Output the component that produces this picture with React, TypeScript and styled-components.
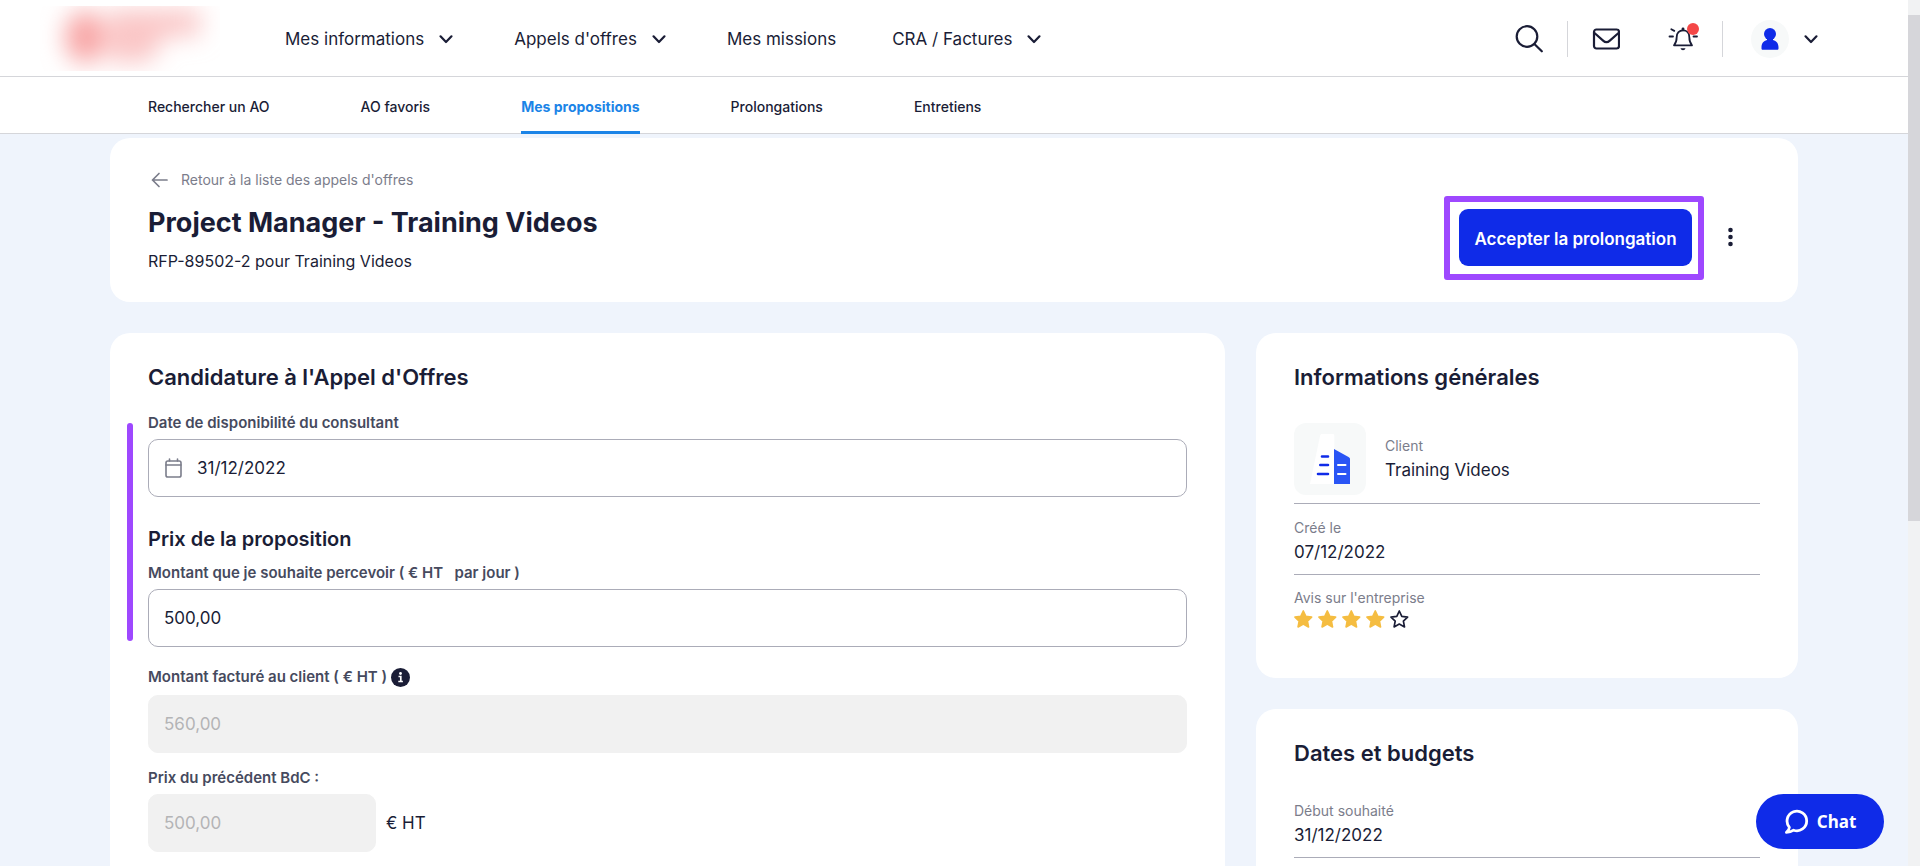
import React from 'react';
import styled, { createGlobalStyle } from 'styled-components';

const color = {
  ink: '#1a1d36',
  label: '#464a5e',
  muted: '#7b7d8b',
  line: '#abacb8',
  hairline: '#d5d6da',
  page: '#eff4fc',
  brand: '#0f2be8',
  tab: '#1b84e7',
  accent: '#9e48ff',
  disabled: '#f1f1f1',
  disabledText: '#b4b4b6',
  star: '#f5bd41',
};

const GlobalStyle = createGlobalStyle`
  *, *::before, *::after { box-sizing: border-box; }
  body {
    margin: 0;
    background: ${color.page};
    color: ${color.ink};
    font-family: Inter, "Liberation Sans", sans-serif;
    font-size: 17px;
    line-height: 24px;
  }
  h1, h2, h3, p, dl, dd { margin: 0; }
  button, input { font: inherit; color: inherit; }
  button { cursor: pointer; }
  svg { display: block; flex: none; }
`;

const Shell = styled.div`
  display: flex;
  height: 100vh;
`;

const Viewport = styled.div`
  flex: 1;
  min-width: 0;
  overflow-y: auto;
  scrollbar-width: none;
`;

const ScrollTrack = styled.div`
  flex: none;
  width: 12px;
  padding: 15px 0 7px;
  background: #f1f2f3;
`;

const ScrollThumb = styled.div`
  height: 60%;
  background: #d6d6da;
`;

const Header = styled.header`
  display: flex;
  align-items: center;
  height: 77px;
  padding: 1px 85px 0 40px;
  background: #fff;
  border-bottom: 1px solid ${color.hairline};
`;

const MainNav = styled.nav`
  display: flex;
  align-items: center;
  gap: 56px;
  margin-left: 65px;
`;

const NavButton = styled.button`
  display: flex;
  align-items: center;
  gap: 10px;
  padding: 0;
  border: 0;
  background: none;
  white-space: nowrap;
`;

const NavLink = styled.a`
  color: inherit;
  text-decoration: none;
  white-space: nowrap;
`;

const Tools = styled.div`
  display: flex;
  align-items: center;
  gap: 24px;
  margin-left: auto;
`;

const IconButton = styled.button`
  position: relative;
  display: flex;
  padding: 0;
  border: 0;
  background: none;
`;

const Messages = styled.div`
  display: flex;
  align-items: center;
  gap: 48px;
`;

const Badge = styled.span`
  position: absolute;
  top: -4px;
  right: -1px;
  width: 12px;
  height: 12px;
  border-radius: 50%;
  background: #f44747;
`;

const Separator = styled.span`
  width: 1px;
  height: 36px;
  background: ${color.hairline};
`;

const Profile = styled.button`
  display: flex;
  align-items: center;
  gap: 10px;
  margin-left: 4px;
  padding: 0;
  border: 0;
  background: none;
`;

const Avatar = styled.span`
  display: flex;
  align-items: center;
  justify-content: center;
  width: 38px;
  height: 38px;
  border-radius: 50%;
  background: #f7f9f9;
`;

const Tabs = styled.nav`
  display: flex;
  gap: 91px;
  height: 57px;
  padding: 0 148px;
  background: #fff;
  border-bottom: 1px solid ${color.hairline};
`;

const Tab = styled.a<{ $active?: boolean }>`
  display: flex;
  align-items: center;
  margin-bottom: -1px;
  padding-top: ${(p) => (p.$active ? 6 : 3)}px;
  border-bottom: ${(p) => (p.$active ? `3px solid ${color.tab}` : '0')};
  border-radius: 2px 2px 0 0;
  color: ${(p) => (p.$active ? color.tab : color.ink)};
  font-size: 14px;
  font-weight: ${(p) => (p.$active ? 700 : 500)};
  text-decoration: none;
  white-space: nowrap;
`;

const Main = styled.main`
  display: grid;
  gap: 31px;
  padding: 4px 110px 31px;
`;

const Card = styled.section`
  padding: 30px 38px;
  border-radius: 20px;
  background: #fff;
`;

const IntroCard = styled(Card)`
  display: flex;
  justify-content: space-between;
  align-items: flex-start;
  padding: 32px 56px 22px 38px;
`;

const BackLink = styled.a`
  display: flex;
  align-items: center;
  gap: 11px;
  margin-bottom: 13px;
  color: ${color.muted};
  font-size: 14px;
  line-height: 20px;
  text-decoration: none;
`;

const PageTitle = styled.h1`
  margin-bottom: 6px;
  font-size: 27px;
  font-weight: 700;
  line-height: 40px;
`;

const Reference = styled.p`
  font-size: 16px;
`;

const Actions = styled.div`
  display: flex;
  align-items: center;
  gap: 14px;
  margin-top: 26px;
`;

const Callout = styled.div`
  padding: 7px 6px 8px 9px;
  border: 6px solid ${color.accent};
  border-radius: 3px;
`;

const PrimaryButton = styled.button`
  width: 233px;
  height: 57px;
  padding: 2px 0 0;
  border: 0;
  border-radius: 9px;
  background: ${color.brand};
  color: #fff;
  font-weight: 600;
`;

const Columns = styled.div`
  display: grid;
  grid-template-columns: 1115fr 542fr;
  gap: 31px;
`;

const Side = styled.div`
  display: grid;
  align-content: start;
  gap: 31px;
`;

const CardTitle = styled.h2`
  font-size: 22px;
  font-weight: 600;
  line-height: 28px;
`;

const SubTitle = styled.h3`
  margin: 28px 0 10px;
  font-size: 20px;
  font-weight: 600;
  line-height: 28px;
`;

const Highlighted = styled.div`
  position: relative;
  margin-top: 22px;

  &::before {
    content: '';
    position: absolute;
    top: 10px;
    bottom: 6px;
    left: -21px;
    width: 6px;
    border-radius: 3px;
    background: ${color.accent};
  }
`;

const Field = styled.div`
  display: grid;
  gap: 6px;
`;

const FieldStack = styled.div`
  display: grid;
  gap: 15px;
  margin-top: 18px;
`;

const LabelRow = styled.div`
  display: flex;
  align-items: center;
  gap: 4px;
  height: 24px;
`;

const Label = styled.label`
  color: ${color.label};
  font-size: 15px;
  font-weight: 600;
  line-height: 20px;
  white-space: pre;
`;

const InputBox = styled.div`
  display: flex;
  align-items: center;
  gap: 15px;
  height: 58px;
  padding: 0 16px;
  border: 1px solid ${color.line};
  border-radius: 10px;
`;

const BareInput = styled.input`
  flex: 1;
  min-width: 0;
  padding: 0;
  border: 0;
  outline: 0;
  background: none;
`;

const TextInput = styled.input`
  width: 100%;
  height: 58px;
  padding: 0 15px;
  border: 1px solid ${color.line};
  border-radius: 10px;
  background: #fff;

  &:disabled {
    border-color: ${color.disabled};
    background: ${color.disabled};
    color: ${color.disabledText};
  }
`;

const WithUnit = styled.div`
  display: grid;
  grid-template-columns: 228px auto;
  justify-content: start;
  align-items: center;
  gap: 10px;
`;

const Details = styled.dl`
  margin-top: 20px;
`;

const ClientDetail = styled.div`
  display: flex;
  align-items: center;
  gap: 19px;
  padding: 12px 0 8px;
  border-bottom: 1px solid ${color.line};
`;

const Detail = styled.div<{ $last?: boolean }>`
  padding: ${(p) => (p.$last ? '13px 0 18px' : '14px 0 10px')};
  border-bottom: ${(p) => (p.$last ? '0' : `1px solid ${color.line}`)};
`;

const ClientLogo = styled.div`
  display: flex;
  width: 72px;
  height: 72px;
  border-radius: 12px;
  background: #f7f9f9;
`;

const Term = styled.dt`
  margin-bottom: 2px;
  color: ${color.muted};
  font-size: 14px;
  line-height: 20px;
`;

const Stars = styled.dd`
  display: flex;
  gap: 4px;
`;

const ChatButton = styled.button`
  position: fixed;
  right: 36px;
  bottom: 17px;
  display: flex;
  align-items: center;
  justify-content: center;
  gap: 8px;
  width: 128px;
  height: 55px;
  border: 0;
  border-radius: 28px;
  background: ${color.brand};
  color: #fff;
  font-family: "Noto Sans", "Open Sans", sans-serif;
  font-weight: 700;
`;

const Chevron = () => (
  <svg width="24" height="24" viewBox="0 0 24 24" fill="none" stroke={color.ink} strokeWidth="2.2" strokeLinecap="round" strokeLinejoin="round">
    <path d="M6.500 9.300l5.500 5.700 5.500-5.700" />
  </svg>
);

const BrandMark = () => (
  <svg width="180" height="65" viewBox="0 0 180 65" role="img" aria-label="Logo">
    <defs>
      <filter id="soft" x="-60%" y="-100%" width="220%" height="300%">
        <feGaussianBlur stdDeviation="12" />
      </filter>
    </defs>
    <g filter="url(#soft)">
      <ellipse cx="45" cy="31" rx="20" ry="26" fill="#f8a4a4" />
      <path d="M68 4h92v26h-36l-14 26H68z" fill="#fac6c6" />
    </g>
  </svg>
);

const SearchIcon = () => (
  <svg width="28" height="28" viewBox="0 0 28 28" fill="none" stroke={color.ink} strokeWidth="2.2" strokeLinecap="round">
    <circle cx="12" cy="11.500" r="10.300" />
    <path d="M19.400 19l7.400 7.300" />
  </svg>
);

const MailIcon = () => (
  <svg width="28" height="22" viewBox="0 0 28 22" fill="none" stroke={color.ink} strokeWidth="2.2" strokeLinejoin="round">
    <rect x="2" y="1.5" width="25" height="19" rx="2.4" />
    <path d="M2.5 5l8.600 7.600c2 1.900 4.700 1.900 6.700 0L26.500 5" />
  </svg>
);

const BellIcon = () => (
  <svg width="30" height="24" viewBox="0 0 30 24" fill="none" stroke={color.ink} strokeWidth="1.8" strokeLinecap="round" strokeLinejoin="round">
    <path d="M6 18.300c2-2.300 2.700-4.300 2.700-8.300 0-4 2.600-6.700 6.300-6.700s6.300 2.700 6.300 6.700c0 4 .7 6 2.700 8.300z" />
    <path d="M15 1.800v1" strokeWidth="2.800" />
    <path d="M1.500 9.500H5M25.500 9.500H29M3.300 2.200l3 1.700" />
    <path d="M12.500 21.300h5c-.6 2.500-4.400 2.500-5 0z" fill={color.ink} stroke="none" />
  </svg>
);

const PersonIcon = () => (
  <svg width="18" height="22" viewBox="0 0 18 22" fill={color.brand}>
    <circle cx="9" cy="6" r="6" />
    <path d="M6 10h6v2c3.500.8 5.500 3.700 5.500 7.200V20.500c0 .8-.5 1.300-1.300 1.300H1.800c-.8 0-1.300-.5-1.300-1.300v-1.300C.5 15.700 2.500 12.800 6 12z" />
  </svg>
);

const BackArrow = () => (
  <svg width="22" height="18" viewBox="0 0 22 18" fill="none" stroke={color.muted} strokeWidth="1.700" strokeLinecap="round" strokeLinejoin="round">
    <path d="M19 9H4.500M11 2.500L4.500 9l6.500 6.500" />
  </svg>
);

const MoreIcon = () => (
  <svg width="24" height="24" viewBox="0 0 24 24" fill={color.ink}>
    <circle cx="12.500" cy="4" r="2.300" />
    <circle cx="12.500" cy="11" r="2.300" />
    <circle cx="12.500" cy="18" r="2.300" />
  </svg>
);

const CalendarIcon = () => (
  <svg width="17" height="20" viewBox="0 0 17 20" fill="none" stroke={color.muted} strokeWidth="1.600" strokeLinecap="round" strokeLinejoin="round">
    <rect x="1" y="3" width="15" height="16" rx="1.800" />
    <path d="M1 7h15M4.500 1v2M12.500 1v2" />
  </svg>
);

const InfoIcon = () => (
  <svg width="19" height="19" viewBox="0 0 19 19">
    <circle cx="9.500" cy="9.500" r="9.500" fill={color.ink} />
    <circle cx="9.500" cy="5.500" r="1.400" fill="#fff" />
    <path d="M7.500 8.500h2.300v4.800M7.300 13.500h4.600" fill="none" stroke="#fff" strokeWidth="1.700" />
  </svg>
);

const BuildingIcon = () => (
  <svg width="72" height="72" viewBox="0 0 72 72">
    <path d="M26 13c.3-1.400 1-2 2.300-2h10.500c1 0 1.500.6 1.500 1.600V61H16z" fill="#fff" />
    <path d="M40 26l14.500 8c1 .6 1.500 1.200 1.500 2.300V61H40z" fill="#2a55f5" />
    <path d="M28 33.500h6M26.300 42h7.700M24 51h10" stroke={color.brand} strokeWidth="2.600" strokeLinecap="round" />
    <path d="M44 42h7.500M44 51h7.500" stroke="#fff" strokeWidth="2" strokeLinecap="round" />
  </svg>
);

const StarIcon = ({ filled }: { filled: boolean }) => (
  <svg
    width="20"
    height="20"
    viewBox="0 0 20 20"
    fill={filled ? color.star : 'none'}
    stroke={filled ? color.star : color.ink}
    strokeWidth="1.700"
    strokeLinejoin="round"
  >
    <path d="M9.300 1l2.500 5.300 5.800.8-4.200 4 1.100 5.800-5.200-2.800-5.200 2.800 1.100-5.800-4.200-4 5.800-.8z" />
  </svg>
);

const ChatIcon = () => (
  <svg width="25" height="25" viewBox="0 0 25 25" fill="none" stroke="#fff" strokeWidth="2.800" strokeLinejoin="round">
    <path d="M5.400 18.300A9.800 9.800 0 1 1 9.600 21.200c-2.200 1.500-4.300 2.100-7.200 2.200 2-1.500 2.900-3 3-5.100z" />
  </svg>
);

const tabs = ['Rechercher un AO', 'AO favoris', 'Mes propositions', 'Prolongations', 'Entretiens'];
const rating = 4;

export default function App() {
  return (
    <>
      <GlobalStyle />
      <Shell>
        <Viewport>
          <Header>
            <BrandMark />
            <MainNav aria-label="Navigation principale">
              <NavButton type="button">Mes informations<Chevron /></NavButton>
              <NavButton type="button">Appels d'offres<Chevron /></NavButton>
              <NavLink href="#missions">Mes missions</NavLink>
              <NavButton type="button">CRA / Factures<Chevron /></NavButton>
            </MainNav>
            <Tools>
              <IconButton type="button" aria-label="Rechercher"><SearchIcon /></IconButton>
              <Separator />
              <Messages>
                <IconButton type="button" aria-label="Messages"><MailIcon /></IconButton>
                <IconButton type="button" aria-label="Notifications"><BellIcon /><Badge /></IconButton>
              </Messages>
              <Separator />
              <Profile type="button" aria-label="Mon compte">
                <Avatar><PersonIcon /></Avatar>
                <Chevron />
              </Profile>
            </Tools>
          </Header>
          <Tabs aria-label="Appels d'offres">
            {tabs.map((name) => (
              <Tab key={name} href="#onglet" $active={name === 'Mes propositions'}>{name}</Tab>
            ))}
          </Tabs>

          <Main>
            <IntroCard>
              <div>
                <BackLink href="#liste"><BackArrow />Retour à la liste des appels d'offres</BackLink>
                <PageTitle>Project Manager - Training Videos</PageTitle>
                <Reference>RFP-89502-2 pour Training Videos</Reference>
              </div>
              <Actions>
                <Callout>
                  <PrimaryButton type="button">Accepter la prolongation</PrimaryButton>
                </Callout>
                <IconButton type="button" aria-label="Plus d'actions"><MoreIcon /></IconButton>
              </Actions>
            </IntroCard>

            <Columns>
              <Card>
                <CardTitle>Candidature à l'Appel d'Offres</CardTitle>
                <Highlighted>
                  <Field>
                    <Label htmlFor="date">Date de disponibilité du consultant</Label>
                    <InputBox>
                      <CalendarIcon />
                      <BareInput id="date" defaultValue="31/12/2022" />
                    </InputBox>
                  </Field>
                  <SubTitle>Prix de la proposition</SubTitle>
                  <Field>
                    <Label htmlFor="amount">{'Montant que je souhaite percevoir ( € HT   par jour )'}</Label>
                    <TextInput id="amount" defaultValue="500,00" />
                  </Field>
                </Highlighted>
                <FieldStack>
                  <Field>
                    <LabelRow>
                      <Label htmlFor="billed">Montant facturé au client ( € HT )</Label>
                      <InfoIcon />
                    </LabelRow>
                    <TextInput id="billed" defaultValue="560,00" disabled />
                  </Field>
                  <Field>
                    <Label htmlFor="previous">Prix du précédent BdC :</Label>
                    <WithUnit>
                      <TextInput id="previous" defaultValue="500,00" disabled />
                      <span>€ HT</span>
                    </WithUnit>
                  </Field>
                </FieldStack>
              </Card>

              <Side>
                <Card>
                  <CardTitle>Informations générales</CardTitle>
                  <Details>
                    <ClientDetail>
                      <ClientLogo><BuildingIcon /></ClientLogo>
                      <div>
                        <Term>Client</Term>
                        <dd>Training Videos</dd>
                      </div>
                    </ClientDetail>
                    <Detail>
                      <Term>Créé le</Term>
                      <dd>07/12/2022</dd>
                    </Detail>
                    <Detail $last>
                      <Term>Avis sur l'entreprise</Term>
                      <Stars aria-label={`${rating} étoiles sur 5`}>
                        {[1, 2, 3, 4, 5].map((n) => <StarIcon key={n} filled={n <= rating} />)}
                      </Stars>
                    </Detail>
                  </Details>
                </Card>
                <Card>
                  <CardTitle>Dates et budgets</CardTitle>
                  <Details>
                    <Detail>
                      <Term>Début souhaité</Term>
                      <dd>31/12/2022</dd>
                    </Detail>
                  </Details>
                </Card>
              </Side>
            </Columns>
          </Main>
        </Viewport>
        <ScrollTrack aria-hidden="true"><ScrollThumb /></ScrollTrack>
      </Shell>
      <ChatButton type="button"><ChatIcon />Chat</ChatButton>
    </>
  );
}
